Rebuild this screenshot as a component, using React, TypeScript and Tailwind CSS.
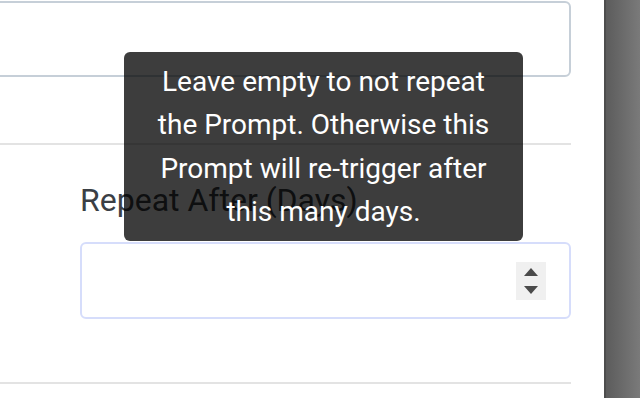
import React from 'react';

export default function App() {
  return (
    <div className="relative flex h-[398px] w-[640px] overflow-hidden bg-white font-['Roboto',sans-serif]">
      <div className="flex w-[604px] flex-col">
        <div className="w-[571px]">
          <div className="-ml-[20px] mt-px h-[76px] rounded-md border-2 border-[#c6cfd8] bg-white" />
          <div className="mt-[66px] h-[2px] bg-[#e3e3e3]" />
          <div className="pl-[80px]">
            <label className="mt-[36px] block text-[32px] leading-[38px] text-[#3b3f45]">
              Repeat After (Days)
            </label>
            <div className="mt-[23px] flex h-[77px] items-center justify-end rounded-md border-2 border-[#d6ddfb] bg-white pr-[23px]">
              <div className="flex h-[38px] w-[30px] flex-col items-center justify-center gap-[10px] bg-[#f0f0f0]">
                <span className="h-0 w-0 border-x-[7px] border-b-[8px] border-x-transparent border-b-[#4a4a4a]" />
                <span className="h-0 w-0 border-x-[7px] border-t-[8px] border-x-transparent border-t-[#4a4a4a]" />
              </div>
            </div>
          </div>
          <div className="mt-[63px] h-[2px] bg-[#e3e3e3]" />
        </div>
      </div>
      <div className="w-[36px] border-l-[2px] border-[#4d4d4d] bg-gradient-to-r from-[#5c5c5c] to-[#7a7a7a]" />
      <div className="absolute left-[124px] top-[52px] flex h-[189px] w-[399px] items-center justify-center rounded-md bg-black/[0.76] px-[18px] text-center text-[28px] leading-[43.5px] text-white">
        Leave empty to not repeat the Prompt. Otherwise this Prompt will re-trigger after this many days.
      </div>
    </div>
  );
}
